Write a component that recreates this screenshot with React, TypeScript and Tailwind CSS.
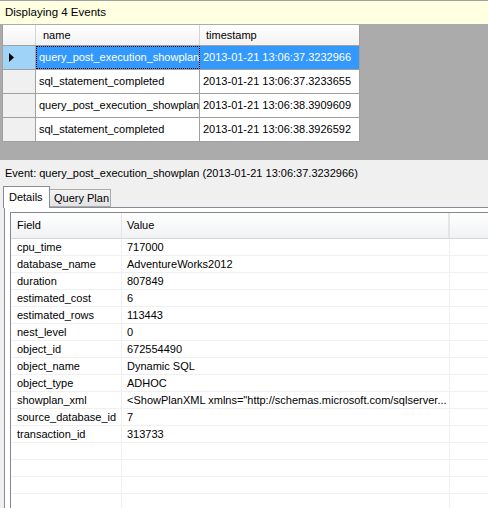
import React from "react";

const events = [
  ["query_post_execution_showplan", "2013-01-21 13:06:37.3232966"],
  ["sql_statement_completed", "2013-01-21 13:06:37.3233655"],
  ["query_post_execution_showplan", "2013-01-21 13:06:38.3909609"],
  ["sql_statement_completed", "2013-01-21 13:06:38.3926592"],
];

const details: [string, string][] = [
  ["cpu_time", "717000"],
  ["database_name", "AdventureWorks2012"],
  ["duration", "807849"],
  ["estimated_cost", "6"],
  ["estimated_rows", "113443"],
  ["nest_level", "0"],
  ["object_id", "672554490"],
  ["object_name", "Dynamic SQL"],
  ["object_type", "ADHOC"],
  ["showplan_xml", '<ShowPlanXML xmlns="http://schemas.microsoft.com/sqlserver...'],
  ["source_database_id", "7"],
  ["transaction_id", "313733"],
  ["", ""],
  ["", ""],
  ["", ""],
  ["", ""],
];

export default function App() {
  return (
    <div
      className="w-[488px] h-[508px] overflow-hidden bg-[#f0f0f0] text-[11px] leading-[13px] text-black flex flex-col whitespace-nowrap"
      style={{ fontFamily: '"Liberation Sans", Arial, sans-serif' }}
    >
      {/* info bar */}
      <div className="h-[24px] shrink-0 border-t border-[#a0a0a0] bg-[#ffffe1] flex items-center pl-[5px] text-[11.5px]">
        Displaying 4 Events
      </div>

      {/* events grid */}
      <div className="h-[136px] shrink-0 bg-[#ababab] pl-[2px] pt-[1px]">
        <div className="w-[358px] bg-white border-l border-[#a0a0a0]">
          {/* header */}
          <div className="flex h-[21px] bg-gradient-to-b from-white to-[#f2f2f2] border-b border-[#a0a0a0]">
            <div className="w-[33px] border-r border-[#d5d5d5]" />
            <div className="w-[164px] border-r border-[#d5d5d5] flex items-center pl-[7px]">name</div>
            <div className="w-[160px] border-r border-[#a0a0a0] flex items-center pl-[6px]">timestamp</div>
          </div>
          {events.map((e, i) => {
            const sel = i === 0;
            return (
              <div key={i} className="flex h-[24px] border-b border-[#a0a0a0]">
                <div
                  className={`w-[33px] shrink-0 border-r border-[#a0a0a0] flex items-center pl-[6px] ${
                    sel ? "bg-[#9fd3f8]" : "bg-[#f0f0f0]"
                  }`}
                >
                  {sel && (
                    <svg width="6" height="9" viewBox="0 0 6 9">
                      <path d="M0 0 L5 4.5 L0 9 Z" fill="#000" />
                    </svg>
                  )}
                </div>
                <div
                  className={`w-[164px] shrink-0 border-r border-[#a0a0a0] flex items-center pl-[3px] overflow-hidden ${
                    sel ? "bg-[#3399ff] text-white outline-1 outline-dotted outline-black -outline-offset-1" : ""
                  }`}
                >
                  {e[0]}
                </div>
                <div
                  className={`w-[160px] shrink-0 border-r border-[#a0a0a0] flex items-center pl-[3px] overflow-hidden ${
                    sel ? "bg-[#3399ff] text-white" : ""
                  }`}
                >
                  {e[1]}
                </div>
              </div>
            );
          })}
        </div>
      </div>

      {/* event detail */}
      <div className="flex-1 flex flex-col">
        <div className="h-[26px] flex items-center pl-[5px] pt-[1px]">
          Event: query_post_execution_showplan (2013-01-21 13:06:37.3232966)
        </div>
        {/* tabs */}
        <div className="h-[21px] flex items-end pl-[3px] relative z-10">
          <div className="w-[47px] h-[22px] bg-white border border-b-0 border-[#898c95] flex items-start pt-[4px] pl-[5px] -mb-[1px]">
            Details
          </div>
          <div className="w-[61px] h-[18px] bg-gradient-to-b from-[#f3f3f3] to-[#e3e3e3] border border-l-0 border-[#acacac] flex items-center pl-[4px]">
            Query Plan
          </div>
        </div>
        {/* tab page */}
        <div className="flex-1 ml-[4px] bg-white border border-r-0 border-[#898c95] pl-[5px] pt-[4px] pb-[7px] flex">
          <div className="flex-1 border border-r-0 border-[#828790] bg-white overflow-hidden">
            <div className="flex h-[26px] bg-gradient-to-b from-white to-[#f1f2f4] border-b border-[#d5d5d5]">
              <div className="w-[111px] border-r border-[#e5e5e5] flex items-center pl-[6px]">Field</div>
              <div className="w-[328px] border-r-2 border-[#e5e5e5] flex items-center pl-[5px]">Value</div>
              <div className="flex-1" />
            </div>
            {details.map(([f, v], i) => (
              <div key={i} className="flex h-[17px] border-b border-[#f0f0f0]">
                <div className="w-[111px] shrink-0 border-r border-[#f0f0f0] flex items-center pl-[6px]">{f}</div>
                <div className="w-[328px] shrink-0 border-r border-[#f0f0f0] flex items-center pl-[5px] overflow-hidden">{v}</div>
                <div className="flex-1" />
              </div>
            ))}
          </div>
        </div>
      </div>
    </div>
  );
}
